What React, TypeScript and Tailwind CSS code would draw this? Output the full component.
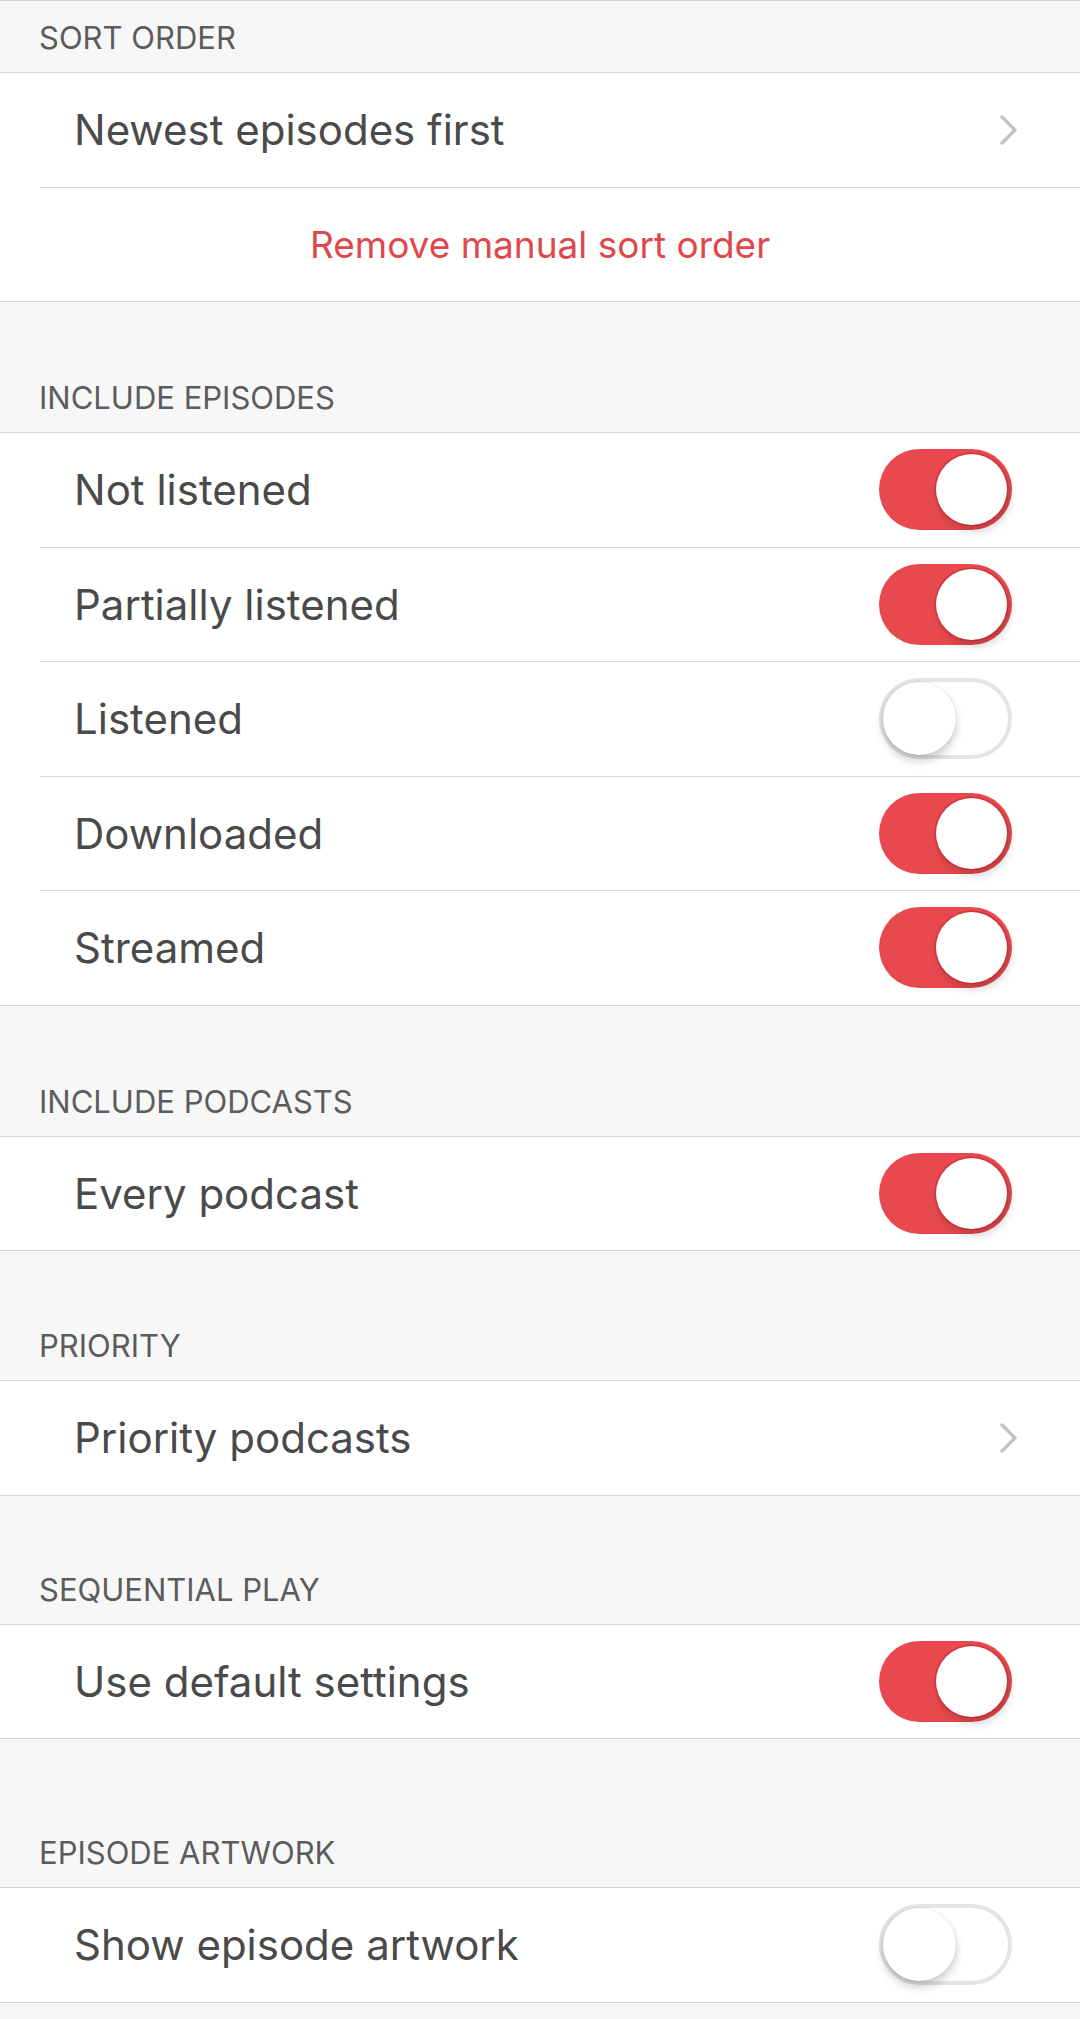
import { Fragment } from "react";

type Row =
  | { kind: "toggle"; label: string; on: boolean }
  | { kind: "link"; label: string }
  | { kind: "action"; label: string };

type Section = { title: string; gap: string; rows: Row[] };

const sections: Section[] = [
  {
    title: "SORT ORDER",
    gap: "h-[72px] border-t border-[#d6d6d6]",
    rows: [
      { kind: "link", label: "Newest episodes first" },
      { kind: "action", label: "Remove manual sort order" },
    ],
  },
  {
    title: "INCLUDE EPISODES",
    gap: "h-[130px]",
    rows: [
      { kind: "toggle", label: "Not listened", on: true },
      { kind: "toggle", label: "Partially listened", on: true },
      { kind: "toggle", label: "Listened", on: false },
      { kind: "toggle", label: "Downloaded", on: true },
      { kind: "toggle", label: "Streamed", on: true },
    ],
  },
  {
    title: "INCLUDE PODCASTS",
    gap: "h-[130px]",
    rows: [{ kind: "toggle", label: "Every podcast", on: true }],
  },
  {
    title: "PRIORITY",
    gap: "h-[129px]",
    rows: [{ kind: "link", label: "Priority podcasts" }],
  },
  {
    title: "SEQUENTIAL PLAY",
    gap: "h-[128px]",
    rows: [{ kind: "toggle", label: "Use default settings", on: true }],
  },
  {
    title: "EPISODE ARTWORK",
    gap: "h-[148px]",
    rows: [{ kind: "toggle", label: "Show episode artwork", on: false }],
  },
];

function Toggle({ on }: { on: boolean }) {
  if (on) {
    return (
      <div className="relative h-[81px] w-[133px] rounded-full bg-[#e8494e]">
        <div className="absolute right-[5px] top-[5px] h-[71px] w-[71px] rounded-full bg-white shadow-[0_0_0_1.5px_rgba(190,40,45,0.55),3px_6px_10px_rgba(0,0,0,0.18)]" />
      </div>
    );
  }
  return (
    <div className="relative h-[81px] w-[133px] rounded-full border-[4px] border-[#e4e4e4] bg-white">
      <div className="absolute left-[0px] top-[0px] h-[73px] w-[73px] rounded-full bg-white shadow-[0_0_0_1px_rgba(0,0,0,0.06),0_6px_10px_rgba(0,0,0,0.2)]" />
    </div>
  );
}

function Chevron() {
  return (
    <svg width="20" height="30" viewBox="0 0 20 30" className="mr-[3px]">
      <path
        d="M3 2 L16 15 L3 28"
        fill="none"
        stroke="#c4c4c8"
        strokeWidth="3.5"
        strokeLinecap="round"
        strokeLinejoin="round"
      />
    </svg>
  );
}

function RowView({ row }: { row: Row }) {
  if (row.kind === "action") {
    return (
      <div className="flex h-[113.5px] items-center justify-center text-[37px] text-[#e0474c]">
        {row.label}
      </div>
    );
  }
  return (
    <div className="flex h-[113.5px] items-center justify-between pl-[74px] pr-[58px]">
      <span className="text-[42px] text-[#4a4a4a]">{row.label}</span>
      {row.kind === "toggle" ? (
        <div className="mr-[10px]">
          <Toggle on={row.on} />
        </div>
      ) : (
        <Chevron />
      )}
    </div>
  );
}

export default function App() {
  return (
    <div
      className="min-h-[2019px] w-[1080px] bg-[#f7f7f7]"
      style={{ fontFamily: "Inter, 'Noto Sans', sans-serif" }}
    >
      {sections.map((s) => (
        <Fragment key={s.title}>
          <div className={`flex items-end pb-[16px] pl-[39px] ${s.gap}`}>
            <span className="text-[31px] leading-[36px] text-[#5c5c5c]">{s.title}</span>
          </div>
          <div className="border-y border-[#d6d6d6] bg-white">
            {s.rows.map((r, i) => (
              <Fragment key={r.label}>
                {i > 0 && <div className="ml-[40px] h-px bg-[#d9d9d9]" />}
                <RowView row={r} />
              </Fragment>
            ))}
          </div>
        </Fragment>
      ))}
    </div>
  );
}
